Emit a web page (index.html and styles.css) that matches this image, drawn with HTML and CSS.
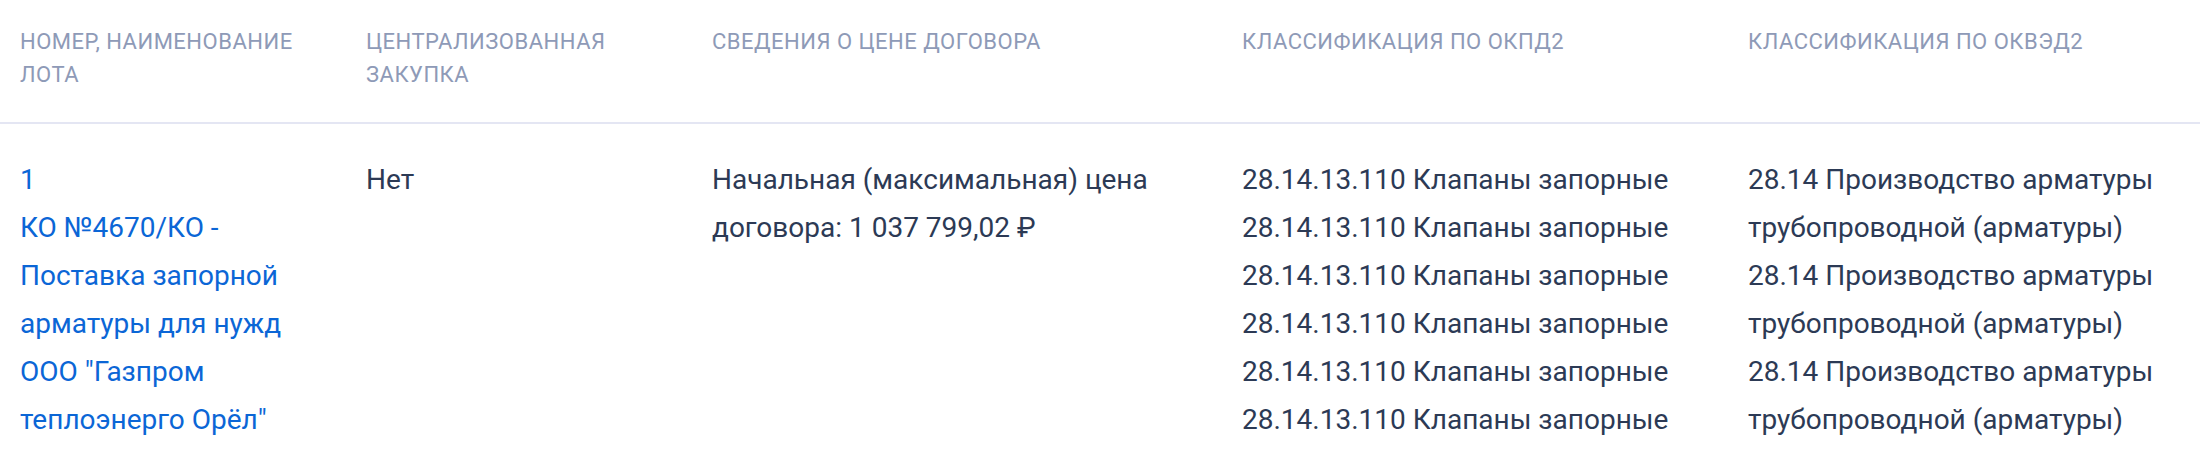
FILE: index.html
```html
<!DOCTYPE html>
<html lang="ru">
<head>
<meta charset="utf-8">
<title>Лоты</title>
<link rel="stylesheet" href="styles.css">
</head>
<body>
<div class="lots">
  <div class="head">
    <div class="th">Номер, наименование лота</div>
    <div class="th">Централизованная закупка</div>
    <div class="th">Сведения о цене договора</div>
    <div class="th">Классификация по ОКПД2</div>
    <div class="th">Классификация по ОКВЭД2</div>
  </div>
  <div class="row">
    <div class="td">
      <a class="lot-link" href="#"><span class="line">1</span><span class="line">КО №4670/КО - Поставка запорной арматуры для нужд ООО "Газпром теплоэнерго Орёл"</span></a>
    </div>
    <div class="td">Нет</div>
    <div class="td">Начальная (максимальная) цена договора: 1 037 799,02 ₽</div>
    <div class="td">
      <div class="item">28.14.13.110 Клапаны запорные</div>
      <div class="item">28.14.13.110 Клапаны запорные</div>
      <div class="item">28.14.13.110 Клапаны запорные</div>
      <div class="item">28.14.13.110 Клапаны запорные</div>
      <div class="item">28.14.13.110 Клапаны запорные</div>
      <div class="item">28.14.13.110 Клапаны запорные</div>
    </div>
    <div class="td">
      <div class="item">28.14 Производство арматуры трубопроводной (арматуры)</div>
      <div class="item">28.14 Производство арматуры трубопроводной (арматуры)</div>
      <div class="item">28.14 Производство арматуры трубопроводной (арматуры)</div>
    </div>
  </div>
</div>
</body>
</html>
```
FILE: styles.css
```css
html, body {
  margin: 0;
  padding: 0;
  background: #ffffff;
}

body {
  font-family: Roboto, "Noto Sans", "Liberation Sans", sans-serif;
  color: #2c3a55;
}

.lots {
  width: 2200px;
}

.head,
.row {
  display: grid;
  grid-template-columns: 346px 346px 530px 506px 1fr;
}

.head {
  border-bottom: 2px solid #e4e6f3;
}

.th {
  padding: 25px 20px 31px;
  font-size: 22px;
  line-height: 33px;
  letter-spacing: 0.5px;
  text-transform: uppercase;
  color: #8e9ab7;
  font-weight: 400;
}

.td {
  padding: 32px 20px 20px;
  font-size: 28px;
  line-height: 48px;
  color: #2c3a55;
}

.lot-link {
  color: #0b66d6;
  text-decoration: none;
}

.line {
  display: block;
}

.item {
  display: block;
}
```
